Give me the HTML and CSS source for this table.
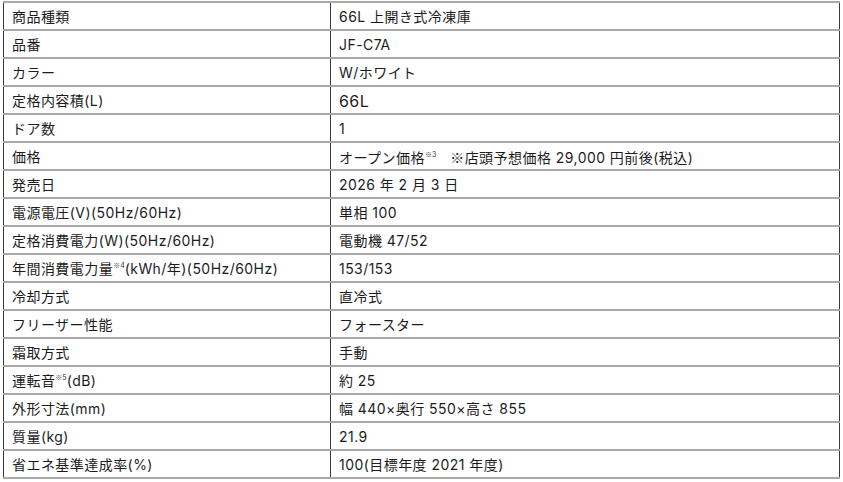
FILE: index.html
```html
<!DOCTYPE html>
<html lang="ja">
<head>
<meta charset="utf-8">
<title>仕様</title>
<link rel="stylesheet" href="styles.css">
</head>
<body>
<table class="spec">
<colgroup><col class="c-label"><col class="c-value"></colgroup>
<tbody>
<tr><td>商品種類</td><td>66L 上開き式冷凍庫</td></tr>
<tr><td>品番</td><td>JF-C7A</td></tr>
<tr><td>カラー</td><td>W/ホワイト</td></tr>
<tr><td>定格内容積(L)</td><td class="big">66L</td></tr>
<tr><td>ドア数</td><td>1</td></tr>
<tr><td>価格</td><td>オープン価格<sup><span class="jp">※</span>3</sup><span class="gap"></span><span class="jp">※</span>店頭予想価格 29,000 円前後(税込)</td></tr>
<tr><td>発売日</td><td>2026 年 2 月 3 日</td></tr>
<tr><td>電源電圧(V)(50Hz/60Hz)</td><td>単相 100</td></tr>
<tr><td>定格消費電力(W)(50Hz/60Hz)</td><td>電動機 47/52</td></tr>
<tr><td>年間消費電力量<sup><span class="jp">※</span>4</sup>(kWh/年)(50Hz/60Hz)</td><td>153/153</td></tr>
<tr><td>冷却方式</td><td>直冷式</td></tr>
<tr><td>フリーザー性能</td><td>フォースター</td></tr>
<tr><td>霜取方式</td><td>手動</td></tr>
<tr><td>運転音<sup><span class="jp">※</span>5</sup>(dB)</td><td>約 25</td></tr>
<tr><td>外形寸法(mm)</td><td>幅 440×奥行 550×高さ 855</td></tr>
<tr><td>質量(kg)</td><td>21.9</td></tr>
<tr><td>省エネ基準達成率(%)</td><td>100(目標年度 2021 年度)</td></tr>
</tbody>
</table>
</body>
</html>
```
FILE: styles.css
```css
html, body {
  background: #ffffff;
}
body {
  margin: 1px 0 0 3px;
  font-family: "Inter", "Noto Sans CJK JP", sans-serif;
  font-size: 14px;
  color: #1c1c1c;
}
.spec {
  border-collapse: collapse;
  table-layout: fixed;
  width: 837px;
}
.c-label {
  width: 327px;
}
.spec td {
  height: 24px;
  padding: 2px 8px 0 8px;
  border-top: 2px solid #a8a8a8;
  border-bottom: 2px solid #a8a8a8;
  border-left: 1px solid #3a3a3a;
  border-right: 1px solid #3a3a3a;
  line-height: 1;
  letter-spacing: 0.45px;
  white-space: nowrap;
  vertical-align: middle;
}
.spec td.big {
  font-size: 16px;
}
.jp {
  font-family: "Noto Sans CJK JP", sans-serif;
}
.spec sup {
  font-size: 7px;
  letter-spacing: 0;
  vertical-align: 6px;
  line-height: 0;
  color: #333333;
}
.gap {
  display: inline-block;
  width: 14px;
}
```
